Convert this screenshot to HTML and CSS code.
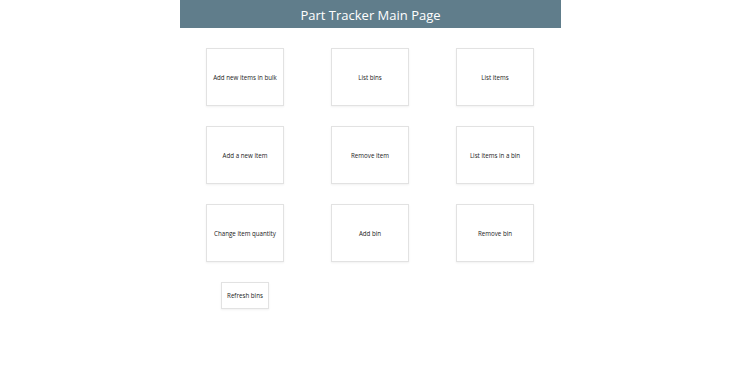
FILE: index.html
```html
<!DOCTYPE html>
<html lang="en">
<head>
    <meta charset="UTF-8">
    <meta name="viewport" content="width=device-width, initial-scale=1.0">
    <title>Part Tracker</title>
    <link rel="stylesheet" href="styles.css">
</head>
<body>
    <div id="page">
        <div id="header">Part Tracker Main Page</div>
        <div id="menu">
            <div class="card">Add new items in bulk</div>
            <div class="card">List bins</div>
            <div class="card">List items</div>
            <div class="card">Add a new item</div>
            <div class="card">Remove item</div>
            <div class="card">List items in a bin</div>
            <div class="card">Change item quantity</div>
            <div class="card">Add bin</div>
            <div class="card">Remove bin</div>
            <div class="cell">
                <div class="card small">Refresh bins</div>
            </div>
        </div>
    </div>
</body>
</html>
```

FILE: styles.css
```css
body{
    margin: 0;
    background: #ffffff;
    font-family: 'Open Sans', 'Noto Sans', sans-serif;
    color: #222222;
}

#page{
    width: 381px;
    margin: 0 0 0 180px;
}

#header{
    background: #607d8b;
    color: #ffffff;
    height: 28px;
    line-height: 30px;
    font-size: 13px;
    text-align: center;
}

#menu{
    display: grid;
    grid-template-columns: repeat(3, 78px);
    grid-auto-rows: 58px;
    column-gap: 47px;
    row-gap: 20px;
    padding-left: 26px;
    margin-top: 20px;
}

.card{
    box-sizing: border-box;
    border: 1px solid #e2e2e2;
    box-shadow: 0 1px 2px rgba(0, 0, 0, 0.06);
    display: flex;
    align-items: center;
    justify-content: center;
    text-align: center;
    font-size: 6.2px;
}

.cell{
    display: flex;
    justify-content: center;
    align-items: flex-start;
}

.card.small{
    width: 48px;
    height: 27px;
}
```
